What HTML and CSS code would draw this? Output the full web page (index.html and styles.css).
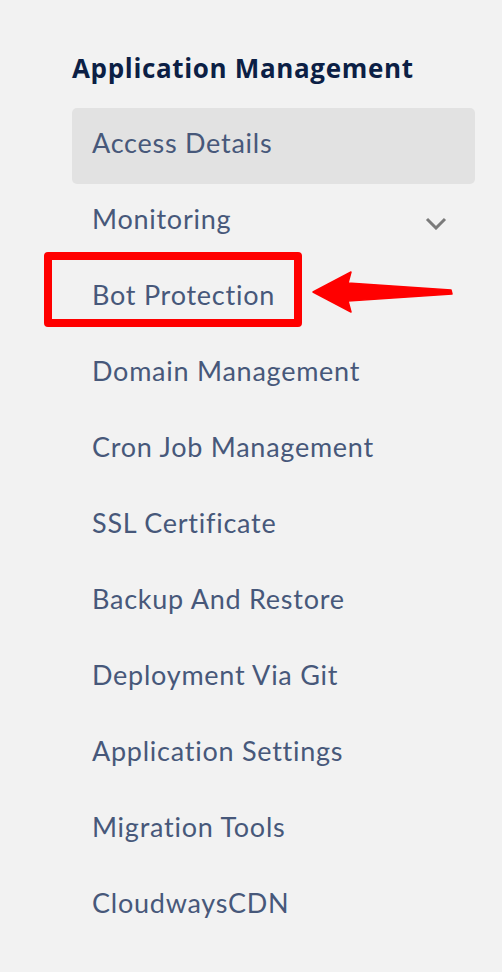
FILE: index.html
```html
<!DOCTYPE html>
<html>
<head>
<meta charset="utf-8">
<link rel="stylesheet" href="styles.css">
</head>
<body>
<nav class="sidenav">
  <h2 class="sidenav-title">Application Management</h2>
  <ul class="menu">
    <li class="menu-item active">Access Details</li>
    <li class="menu-item has-sub">Monitoring
      <svg class="chevron" width="22" height="13" viewBox="0 0 22 13"><path d="M2 2 L11 11 L20 2" fill="none" stroke="#7b7b7b" stroke-width="3"/></svg>
    </li>
    <li class="menu-item highlighted">Bot Protection
      <span class="callout-box"></span>
      <svg class="callout-arrow" width="145" height="44" viewBox="0 0 145 44"><polygon points="1,21 39,1 36,12 139,19 140,23 36,30 39,41" fill="#ff0000" stroke="#ff0000" stroke-width="1.5" stroke-linejoin="round"/></svg>
    </li>
    <li class="menu-item">Domain Management</li>
    <li class="menu-item">Cron Job Management</li>
    <li class="menu-item">SSL Certificate</li>
    <li class="menu-item">Backup And Restore</li>
    <li class="menu-item">Deployment Via Git</li>
    <li class="menu-item">Application Settings</li>
    <li class="menu-item">Migration Tools</li>
    <li class="menu-item">CloudwaysCDN</li>
  </ul>
</nav>
</body>
</html>
```

FILE: styles.css
```css
html, body {
  margin: 0;
  padding: 0;
  background: #f2f2f2;
}
body {
  font-family: Lato, "Noto Sans", sans-serif;
}
.sidenav {
  padding: 51px 27px 0 72px;
}
.sidenav-title {
  margin: 0 0 23px 0;
  font-family: "Open Sans", Lato, sans-serif;
  font-size: 26px;
  line-height: 34px;
  font-weight: 700;
  color: #0c1f45;
  letter-spacing: 0.65px;
  white-space: nowrap;
}
.menu {
  list-style: none;
  margin: 0;
  padding: 0;
}
.menu-item {
  position: relative;
  height: 76px;
  display: flex;
  align-items: center;
  padding: 0 28px 6px 20px;
  box-sizing: border-box;
  font-size: 27px;
  line-height: 34px;
  color: #47587a;
  letter-spacing: 0.75px;
}
.menu-item.active {
  background: #e2e2e2;
  border-radius: 5px;
}
.chevron {
  margin-left: auto;
  margin-top: 8px;
}
.callout-box {
  position: absolute;
  left: -28px;
  top: -8px;
  width: 258px;
  height: 75px;
  box-sizing: border-box;
  border: 8px solid #ff0000;
  border-radius: 4px;
}
.callout-arrow {
  position: absolute;
  left: 240px;
  top: 11px;
}
```
